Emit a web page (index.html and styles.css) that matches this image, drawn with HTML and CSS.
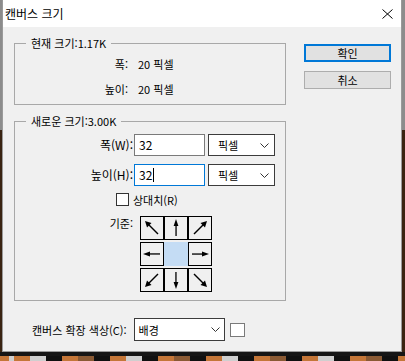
FILE: index.html
```html
<!DOCTYPE html>
<html lang="ko">
<head>
    <meta charset="utf-8">
    <title>캔버스 크기</title>
    <link rel="stylesheet" href="styles.css">
</head>
<body>
    <svg class="defs" width="0" height="0">
        <defs>
            <g id="arrow-straight">
                <polygon points="11,2 8.6,9 13.4,9" fill="#000"/>
                <rect x="10.4" y="8" width="1.3" height="11" fill="#000"/>
            </g>
            <g id="arrow-diag">
                <polygon points="4,4 10.5,6 6,10.5" fill="#000"/>
                <line x1="7.5" y1="7.5" x2="17" y2="17" stroke="#000" stroke-width="1.4"/>
            </g>
        </defs>
    </svg>
    <div class="desktop">
        <div class="dialog">
            <div class="titlebar">
                <span class="title">캔버스 크기</span>
                <svg class="close" width="11" height="10" viewBox="0 0 11 10">
                    <path d="M0.5 0.5 L10.5 9.5 M10.5 0.5 L0.5 9.5" stroke="#000" stroke-width="1" fill="none"/>
                </svg>
            </div>
            <div class="dialog-body">
                <div class="main">
                    <fieldset class="group current">
                        <legend>현재 크기:1.17K</legend>
                        <div class="info-row"><span class="info-label">폭:</span><span>20 픽셀</span></div>
                        <div class="info-row"><span class="info-label">높이:</span><span>20 픽셀</span></div>
                    </fieldset>
                    <fieldset class="group new-size">
                        <legend>새로운 크기:3.00K</legend>
                        <div class="form-row">
                            <span class="form-label">폭(W):</span>
                            <div class="field">32</div>
                            <div class="select unit">
                                <span>픽셀</span>
                                <svg width="9" height="5" viewBox="0 0 9 5"><polyline points="0.5,0.5 4.5,4.5 8.5,0.5" fill="none" stroke="#333"/></svg>
                            </div>
                        </div>
                        <div class="form-row">
                            <span class="form-label">높이(H):</span>
                            <div class="field focused">32<span class="caret"></span></div>
                            <div class="select unit">
                                <span>픽셀</span>
                                <svg width="9" height="5" viewBox="0 0 9 5"><polyline points="0.5,0.5 4.5,4.5 8.5,0.5" fill="none" stroke="#333"/></svg>
                            </div>
                        </div>
                        <div class="check-row">
                            <span class="checkbox"></span>
                            <span>상대치(R)</span>
                        </div>
                        <div class="anchor-row">
                            <span class="form-label">기준:</span>
                            <div class="anchor-grid">
                                <div class="anchor"><svg width="22" height="22"><use href="#arrow-diag"/></svg></div>
                                <div class="anchor"><svg width="22" height="22"><use href="#arrow-straight"/></svg></div>
                                <div class="anchor"><svg width="22" height="22"><use href="#arrow-diag" transform="rotate(90 11 11)"/></svg></div>
                                <div class="anchor"><svg width="22" height="22"><use href="#arrow-straight" transform="rotate(-90 11 11)"/></svg></div>
                                <div class="anchor selected"></div>
                                <div class="anchor"><svg width="22" height="22"><use href="#arrow-straight" transform="rotate(90 11 11)"/></svg></div>
                                <div class="anchor"><svg width="22" height="22"><use href="#arrow-diag" transform="rotate(-90 11 11)"/></svg></div>
                                <div class="anchor"><svg width="22" height="22"><use href="#arrow-straight" transform="rotate(180 11 11)"/></svg></div>
                                <div class="anchor"><svg width="22" height="22"><use href="#arrow-diag" transform="rotate(180 11 11)"/></svg></div>
                            </div>
                        </div>
                    </fieldset>
                    <div class="ext-row">
                        <span>캔버스 확장 색상(C):</span>
                        <div class="select ext">
                            <span>배경</span>
                            <svg width="9" height="5" viewBox="0 0 9 5"><polyline points="0.5,0.5 4.5,4.5 8.5,0.5" fill="none" stroke="#333"/></svg>
                        </div>
                        <span class="swatch"></span>
                    </div>
                </div>
                <div class="buttons">
                    <button class="btn default">확인</button>
                    <button class="btn">취소</button>
                </div>
            </div>
        </div>
        <div class="floor"></div>
    </div>
</body>
</html>
```

FILE: styles.css
```css
* {
    box-sizing: border-box;
}
body {
    margin: 0;
    width: 405px;
    height: 361px;
    overflow: hidden;
    background-color: #1b1b1b;
    font-family: "Noto Sans CJK KR", "Noto Sans", sans-serif;
    font-size: 11px;
    line-height: 16px;
    color: #000;
}
.defs {
    position: absolute;
}
.desktop {
    display: flex;
    flex-direction: column;
    height: 100%;
    background: linear-gradient(#8c8c8c 0, #8c8c8c 130px, #3a2412 130px);
}
.dialog {
    margin-left: 2px;
    width: 400px;
    height: 352px;
    background-color: #f0f0f0;
    border: 1px solid #9a9a9a;
    border-top: 0;
    display: flex;
    flex-direction: column;
}
.titlebar {
    height: 27px;
    flex: none;
    background-color: #fff;
    display: flex;
    align-items: center;
    justify-content: space-between;
    padding: 0 8px 0 2px;
    font-size: 12px;
}
.dialog-body {
    display: flex;
    align-items: flex-start;
    padding: 8px 0 0 11px;
}
.main {
    width: 272px;
}
.group {
    margin: 0;
    padding: 0;
    border: 1px solid #a8a8a8;
    min-width: 0;
}
.group legend {
    padding: 0 5px;
    margin-left: 11px;
    line-height: 16px;
}
.current {
    padding: 5px 0 7px;
}
.info-row {
    display: grid;
    grid-template-columns: 113px auto;
    column-gap: 10px;
}
.info-row + .info-row {
    margin-top: 9px;
}
.info-label {
    text-align: right;
}
.new-size {
    margin-top: 8px;
    padding: 5px 0 8px;
}
.form-row {
    display: flex;
    align-items: center;
    height: 22px;
}
.form-row + .form-row {
    margin-top: 8px;
}
.form-label {
    width: 118px;
    flex: none;
    text-align: right;
}
.form-row .form-label {
    font-size: 12px;
}
.field {
    margin-left: 1px;
    width: 71px;
    height: 22px;
    background-color: #fff;
    border: 1px solid #7a7a7a;
    padding: 0 4px;
    display: flex;
    align-items: center;
    font-size: 12px;
}
.field.focused {
    border-color: #0078d7;
}
.caret {
    width: 1px;
    height: 14px;
    margin-left: 1px;
    background-color: #000;
}
.select {
    display: flex;
    align-items: center;
    justify-content: space-between;
    background-color: #fff;
    border: 1px solid #3c3c3c;
    height: 22px;
}
.select.unit {
    width: 67px;
    margin-left: 3px;
    padding: 0 5px 0 9px;
}
.check-row {
    display: flex;
    align-items: center;
    height: 13px;
    margin-top: 7px;
    padding-left: 101px;
}
.checkbox {
    width: 13px;
    height: 13px;
    border: 1px solid #333;
    background-color: #fff;
    margin-right: 4px;
}
.anchor-row {
    display: flex;
    align-items: flex-start;
    margin-top: 10px;
}
.anchor-row .form-label {
    line-height: 14px;
}
.anchor-grid {
    margin-left: 7px;
    display: grid;
    grid-template-columns: repeat(3, 24px);
    grid-auto-rows: 24px;
    row-gap: 2px;
}
.anchor {
    border: 1px solid #000;
    display: flex;
    align-items: center;
    justify-content: center;
}
.anchor.selected {
    border: 0;
    background-color: #c4dcf4;
}
.ext-row {
    display: flex;
    align-items: center;
    margin-top: 17px;
    padding-left: 18px;
}
.select.ext {
    width: 91px;
    height: 23px;
    margin-left: 7px;
    padding: 0 4px 0 4px;
}
.swatch {
    width: 15px;
    height: 14px;
    margin-left: 5px;
    background-color: #fff;
    border: 1px solid #7a7a7a;
}
.buttons {
    margin-left: 18px;
    padding-top: 9px;
    display: flex;
    flex-direction: column;
    gap: 9px;
}
.btn {
    width: 87px;
    height: 18px;
    padding: 0;
    font: inherit;
    line-height: 14px;
    color: #000;
    background-color: #e1e1e1;
    border: 1px solid #adadad;
}
.btn.default {
    border: 2px solid #0078d7;
}
.floor {
    flex: 1;
    background:
        linear-gradient(#151515, #151515) top / 100% 4px no-repeat,
        repeating-linear-gradient(90deg, #c47638 0, #c47638 16px, #cfcfcf 16px, #cfcfcf 32px, #101010 32px, #101010 48px, #c47638 48px, #c47638 64px, #8a5a34 64px, #8a5a34 80px, #101010 80px, #101010 96px) 14px 0;
}
```
